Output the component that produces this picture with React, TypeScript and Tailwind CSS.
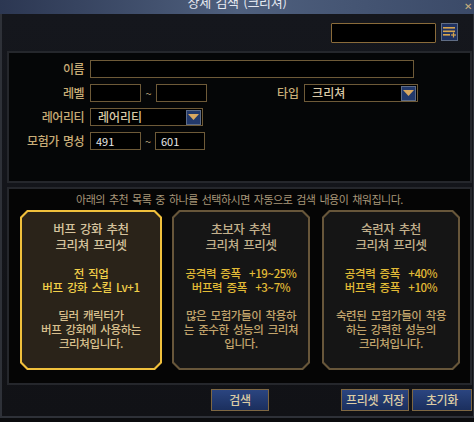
import React from 'react';

const cards = [
  {
    title: ['버프 강화 추천', '크리쳐 프리셋'],
    stats: ['전 직업', '버프 강화 스킬 Lv+1'],
    desc: ['딜러 캐릭터가', '버프 강화에 사용하는', '크리쳐입니다.'],
    selected: true,
  },
  {
    title: ['초보자 추천', '크리쳐 프리셋'],
    stats: ['공격력 증폭  +19~25%', '버프력 증폭  +3~7%'],
    desc: ['많은 모험가들이 착용하', '는 준수한 성능의 크리쳐', '입니다.'],
    selected: false,
  },
  {
    title: ['숙련자 추천', '크리쳐 프리셋'],
    stats: ['공격력 증폭  +40%', '버프력 증폭  +10%'],
    desc: ['숙련된 모험가들이 착용', '하는 강력한 성능의', '크리쳐입니다.'],
    selected: false,
  },
];

const outerCut =
  '[clip-path:polygon(7px_0,calc(100%_-_7px)_0,100%_7px,100%_calc(100%_-_7px),calc(100%_-_7px)_100%,7px_100%,0_calc(100%_-_7px),0_7px)]';
const innerCut =
  '[clip-path:polygon(6px_0,calc(100%_-_6px)_0,100%_6px,100%_calc(100%_-_6px),calc(100%_-_6px)_100%,6px_100%,0_calc(100%_-_6px),0_6px)]';

function DropButton() {
  return (
    <div className="w-[15px] h-[15px] border border-[#5d6b86] bg-[#22386a] flex items-center justify-center">
      <svg width="11" height="7" viewBox="0 0 11 7">
        <polygon points="0,0 11,0 5.5,6" fill="#d9a860" />
      </svg>
    </div>
  );
}

function Box({ w, children }: { w: string; children?: React.ReactNode }) {
  return (
    <div className={`${w} h-[18px] border border-[#6e5a38] bg-black flex items-center pl-[5px] text-[11px] text-[#e8e8e8]`}>
      {children}
    </div>
  );
}

function Select({ w, label }: { w: string; label: string }) {
  return (
    <div className={`${w} h-[18px] border border-[#6e5a38] bg-black flex items-center justify-between pl-[7px] pr-[1px] text-[12px] font-medium text-[#d8c8a6]`}>
      <span className="leading-none">{label}</span>
      <DropButton />
    </div>
  );
}

function Label({ text }: { text: string }) {
  return (
    <div className="w-[75px] text-right text-[12px] font-medium tracking-[-0.5px] [word-spacing:2px] text-[#c8ac76] leading-none">
      {text}
    </div>
  );
}

function Card({ c }: { c: (typeof cards)[number] }) {
  const sel = c.selected;
  return (
    <div className={`${sel ? 'w-[142px] bg-[#f0c03c]' : 'w-[138px] bg-[#67563a]'} h-[160px] p-[2px] ${outerCut}`}>
      <div
        className={`h-full ${sel ? 'bg-[#2a2319]' : 'bg-[#151515]'} ${innerCut} flex flex-col items-center text-center pt-[9px] tracking-[-0.4px] [word-spacing:2px] font-medium`}
      >
        <div className={`text-[12.5px] leading-[16px] ${sel ? 'text-[#d6c49e]' : 'text-[#c2b08c]'}`}>
          {c.title.map((t) => (
            <div key={t}>{t}</div>
          ))}
        </div>
        <div className={`mt-[13px] text-[11.5px] leading-[14px] whitespace-pre ${sel ? 'text-[#f2d04a]' : 'text-[#e2bb36]'}`}>
          {c.stats.map((t) => (
            <div key={t}>{t}</div>
          ))}
        </div>
        <div className={`mt-[14px] text-[11.5px] leading-[14px] ${sel ? 'text-[#d9c08e]' : 'text-[#c2a46c]'}`}>
          {c.desc.map((t) => (
            <div key={t}>{t}</div>
          ))}
        </div>
      </div>
    </div>
  );
}

function Btn({ w, text }: { w: string; text: string }) {
  return (
    <div
      className={`${w} h-[22px] border border-[#7e6742] bg-gradient-to-b from-[#2b4580] to-[#1b2f5e] flex items-center justify-center text-[12px] font-medium text-[#dccca4] tracking-[-0.3px] [word-spacing:2px]`}
    >
      {text}
    </div>
  );
}

export default function App() {
  return (
    <div className="w-[474px] h-[422px] bg-[#0b0c0e] overflow-hidden font-['Noto_Sans_CJK_KR',sans-serif]">
      {/* title bar */}
      <div className="relative h-[14px] overflow-hidden bg-gradient-to-r from-[#2c3752] via-[#4f607e] to-[#3b4a68] flex justify-center">
        <span className="text-[13px] leading-[16px] text-[#e4e8f0] -translate-y-[6px] tracking-[-0.3px] [word-spacing:2px]">
          상세 검색 (크리쳐)
        </span>
        <span className="absolute right-[2px] top-[1px] text-[10px] leading-[10px] text-[#c9b07e]">✕</span>
      </div>

      {/* window body */}
      <div className="h-[404px] bg-gradient-to-b from-[#15171d] to-[#111216] border-l-2 border-r border-b-2 border-[#2e3138] flex flex-col">
        {/* search row */}
        <div className="flex justify-end items-start pt-[9px] pr-[15px] gap-[5px]">
          <div className="w-[105px] h-[20px] bg-black border border-[#8a6b3a] rounded-[1px]" />
          <div className="w-[17px] h-[18px] border border-[#5f6c84] bg-[#1f3160] flex items-center justify-center">
            <svg width="13" height="12" viewBox="0 0 13 12">
              <rect x="0" y="1" width="12" height="1.6" fill="#d7a54e" />
              <rect x="0" y="4.5" width="12" height="1.6" fill="#d7a54e" />
              <rect x="0" y="8" width="7" height="1.6" fill="#d7a54e" />
              <rect x="8" y="8.4" width="5" height="1.2" fill="#d7a54e" />
              <rect x="9.9" y="6.5" width="1.2" height="5" fill="#d7a54e" />
            </svg>
          </div>
        </div>

        {/* upper filter panel */}
        <div className="mt-[8px] ml-[5px] mr-[1px] h-[132px] border-2 border-[#25272c] bg-[#050607] pt-[7px] flex flex-col gap-[6px]">
          <div className="flex items-center gap-[6px]">
            <Label text="이름" />
            <Box w="w-[324px]" />
          </div>
          <div className="flex items-center">
            <Label text="레벨" />
            <div className="ml-[6px]">
              <Box w="w-[51px]" />
            </div>
            <span className="w-[15px] text-center text-[11px] text-[#b9a27a]">~</span>
            <Box w="w-[51px]" />
            <div className="ml-[70px] text-[12px] font-medium text-[#c8ac76] leading-none">타입</div>
            <div className="ml-[5px]">
              <Select w="w-[114px]" label="크리쳐" />
            </div>
          </div>
          <div className="flex items-center gap-[6px]">
            <Label text="레어리티" />
            <Select w="w-[113px]" label="레어리티" />
          </div>
          <div className="flex items-center">
            <Label text="모험가 명성" />
            <div className="ml-[6px]">
              <Box w="w-[51px]">491</Box>
            </div>
            <span className="w-[14px] text-center text-[11px] text-[#b9a27a]">~</span>
            <Box w="w-[50px]">601</Box>
          </div>
        </div>

        {/* lower preset panel */}
        <div className="mt-[4px] ml-[5px] mr-[1px] h-[198px] border-2 border-[#25272c] bg-[#050505] flex flex-col">
          <div className="pt-[2px] text-center text-[11px] leading-[16px] tracking-[-0.5px] [word-spacing:2px] text-[#a8977a]">
            아래의 추천 목록 중 하나를 선택하시면 자동으로 검색 내용이 채워집니다.
          </div>
          <div className="mt-[3px] pl-[11px] flex gap-[10px]">
            <Card c={cards[0]} />
            <Card c={cards[1]} />
            <div className="ml-[2px]">
              <Card c={cards[2]} />
            </div>
          </div>
        </div>

        {/* buttons */}
        <div className="mt-[4px] pl-[209px] pr-[1px] flex">
          <Btn w="w-[58px]" text="검색" />
          <div className="flex-1" />
          <div className="flex gap-[3px]">
            <Btn w="w-[68px]" text="프리셋 저장" />
            <Btn w="w-[60px]" text="초기화" />
          </div>
        </div>
      </div>
    </div>
  );
}
